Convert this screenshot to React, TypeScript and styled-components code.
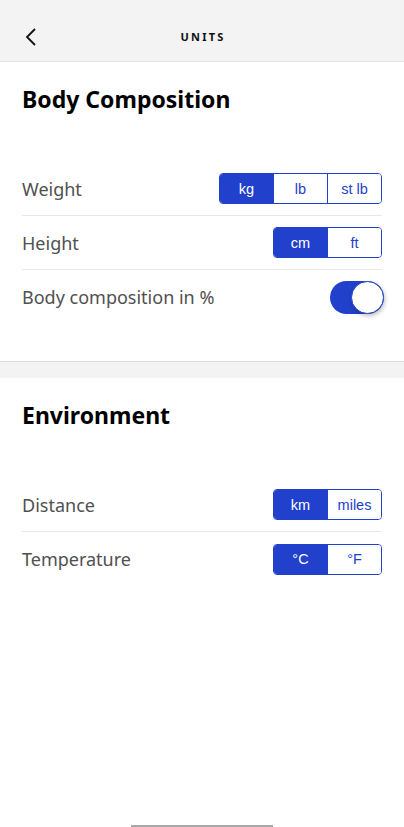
import React from "react";
import styled, { createGlobalStyle } from "styled-components";

const Global = createGlobalStyle`
  html, body { margin: 0; padding: 0; background: #fff; }
  body { font-family: "Noto Sans", "Liberation Sans", sans-serif; }
  * { box-sizing: border-box; }
`;

const BLUE = "#2140cc";

const Page = styled.div`
  width: 404px;
  height: 827px;
  display: flex;
  flex-direction: column;
  background: #fff;
  position: relative;
  overflow: hidden;
`;

const Header = styled.header`
  height: 62px;
  flex-shrink: 0;
  padding-top: 12px;
  background: #f3f3f3;
  border-bottom: 1px solid #e3e3e3;
  display: grid;
  grid-template-columns: 60px 1fr 60px;
  align-items: center;
`;

const BackButton = styled.button`
  border: 0;
  background: none;
  padding: 0 0 0 24px;
  height: 100%;
  display: flex;
  align-items: center;
  cursor: pointer;
`;

const Title = styled.h1`
  margin: 0;
  text-align: center;
  font-size: 11px;
  font-weight: 700;
  letter-spacing: 2.2px;
  color: #111;
  padding-left: 2px;
`;

const Section = styled.section`
  padding: 21px 22px 37px;
`;

const SectionTitle = styled.h2`
  margin: 0 0 47px;
  font-size: 23px;
  line-height: 32px;
  font-weight: 700;
  color: #000;
`;

const Row = styled.div`
  height: 54px;
  display: flex;
  align-items: center;
  justify-content: space-between;
  border-bottom: 1px solid #e8e8e8;
  &:last-child { border-bottom: 0; }
`;

const Label = styled.span`
  font-size: 18px;
  color: #505050;
`;

const Separator = styled.div`
  height: 17px;
  background: #f3f3f3;
  border-top: 1px solid #dcdcdc;
`;

const Segmented = styled.div`
  display: flex;
  height: 31px;
  border: 1px solid ${BLUE};
  border-radius: 4px;
  overflow: hidden;
`;

const Segment = styled.button<{ $active?: boolean }>`
  width: 54px;
  height: 100%;
  border: 0;
  border-left: 1px solid ${BLUE};
  &:first-child { border-left: 0; width: 53px; }
  background: ${(p) => (p.$active ? BLUE : "#fff")};
  color: ${(p) => (p.$active ? "#fff" : BLUE)};
  font-family: "Liberation Sans", Arial, sans-serif;
  font-size: 14.5px;
  padding: 0;
  cursor: pointer;
`;

const Toggle = styled.div`
  width: 54px;
  height: 33px;
  border-radius: 17px;
  background: ${BLUE};
  position: relative;
  margin-right: -2px;
`;

const Knob = styled.div`
  position: absolute;
  right: 0;
  top: 0;
  width: 33px;
  height: 33px;
  border-radius: 50%;
  background: #fff;
  border: 1.5px solid ${BLUE};
  box-shadow: 1px 2px 4px rgba(0, 0, 0, 0.25);
`;

const HomeIndicator = styled.div`
  position: absolute;
  bottom: 0;
  left: 131px;
  width: 142px;
  height: 2px;
  background: #a8a8a8;
`;

type Opt = { label: string; active?: boolean };

const SegmentGroup = ({ options }: { options: Opt[] }) => (
  <Segmented>
    {options.map((o) => (
      <Segment key={o.label} $active={o.active}>
        {o.label}
      </Segment>
    ))}
  </Segmented>
);

export default function App() {
  return (
    <>
      <Global />
      <Page>
        <Header>
          <BackButton aria-label="Back">
            <svg width="14" height="20" viewBox="0 0 14 20">
              <path d="M11 2 L3 10 L11 18" fill="none" stroke="#111" strokeWidth="1.8" />
            </svg>
          </BackButton>
          <Title>UNITS</Title>
          <div />
        </Header>
        <Section>
          <SectionTitle>Body Composition</SectionTitle>
          <div>
            <Row>
              <Label>Weight</Label>
              <SegmentGroup options={[{ label: "kg", active: true }, { label: "lb" }, { label: "st lb" }]} />
            </Row>
            <Row>
              <Label>Height</Label>
              <SegmentGroup options={[{ label: "cm", active: true }, { label: "ft" }]} />
            </Row>
            <Row>
              <Label>Body composition in %</Label>
              <Toggle>
                <Knob />
              </Toggle>
            </Row>
          </div>
        </Section>
        <Separator />
        <Section>
          <SectionTitle>Environment</SectionTitle>
          <div>
            <Row>
              <Label>Distance</Label>
              <SegmentGroup options={[{ label: "km", active: true }, { label: "miles" }]} />
            </Row>
            <Row>
              <Label>Temperature</Label>
              <SegmentGroup options={[{ label: "°C", active: true }, { label: "°F" }]} />
            </Row>
          </div>
        </Section>
        <HomeIndicator />
      </Page>
    </>
  );
}
